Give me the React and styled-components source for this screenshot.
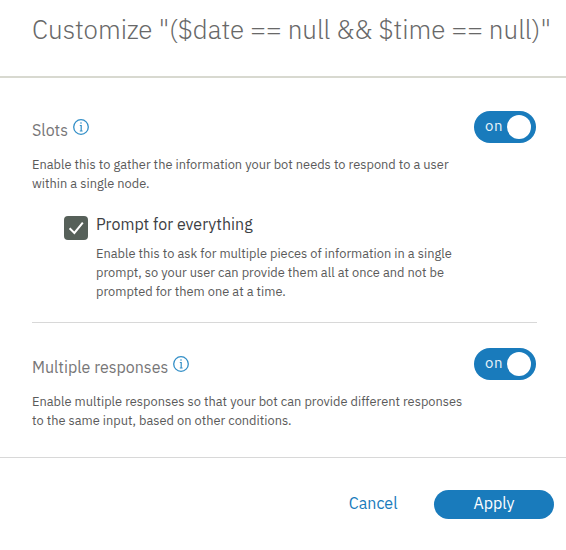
import React, { useState } from "react";
import styled, { createGlobalStyle } from "styled-components";

const GlobalStyle = createGlobalStyle`
  *, *::before, *::after { box-sizing: border-box; }
  html, body, #root { height: 100%; }
  body {
    margin: 0;
    overflow: hidden;
    background: #fff;
    font-family: "IBM Plex Sans", Roboto, sans-serif;
  }
  button { font-family: inherit; border: 0; padding: 0; cursor: pointer; }
`;

const Dialog = styled.section`
  display: flex;
  flex-direction: column;
  width: 566px;
  height: 550px;
`;

const Header = styled.header`
  height: 78px;
  padding: 11px 0 0 32px;
  border-bottom: 2px solid #d8d9d0;
`;

const Title = styled.h1`
  margin: 0;
  font-size: 26px;
  font-weight: 300;
  line-height: 36px;
  white-space: nowrap;
  color: #686868;
`;

const Body = styled.div`
  height: 380px;
  padding: 0 29px 0 32px;
  border-bottom: 1px solid #d8d8d8;
`;

const Setting = styled.section`
  padding-top: ${(p) => p.$top}px;
  height: ${(p) => p.$height}px;
  border-bottom: ${(p) => (p.$divided ? "1px solid #d8d8d8" : "0")};
`;

const SettingHead = styled.div`
  display: flex;
  justify-content: space-between;
  height: 44px;
  padding-right: 1px;
`;

const SettingName = styled.h2`
  display: flex;
  align-items: flex-start;
  gap: 5px;
  margin: 0;
  padding-top: 7px;
  font-size: 16px;
  font-weight: 400;
  line-height: 24px;
  color: #777677;
`;

const InfoIcon = styled.svg`
  display: block;
  width: 16px;
  height: 16px;
  margin-top: 1px;
  fill: none;
  stroke: #338fc7;
`;

const Description = styled.p`
  margin: 0;
  font-size: 12.8px;
  line-height: 19px;
  letter-spacing: 0.01px;
  white-space: pre-line;
  color: #5a5a5a;
`;

const Switch = styled.button`
  display: flex;
  align-items: center;
  justify-content: ${(p) => (p.$on ? "flex-end" : "flex-start")};
  flex-direction: ${(p) => (p.$on ? "row" : "row-reverse")};
  gap: 4px;
  width: 62px;
  height: 32px;
  padding: 0 5px;
  border-radius: 16px;
  background: ${(p) => (p.$on ? "#197bbc" : "#8c9696")};
`;

const SwitchText = styled.span`
  font-size: 15px;
  line-height: 20px;
  letter-spacing: 0.5px;
  margin-top: -2px;
  color: #e8f2f8;
`;

const Knob = styled.span`
  width: 24px;
  height: 24px;
  border-radius: 50%;
  background: #fff;
`;

const Option = styled.div`
  display: flex;
  gap: 8px;
  margin: 19px 0 0 32px;
`;

const Checkbox = styled.button`
  flex: none;
  width: 24px;
  height: 24px;
  margin-top: 4px;
  border-radius: 4px;
  background: #566059;
  color: #fff;
`;

const CheckIcon = styled.svg`
  display: block;
  width: 24px;
  height: 24px;
  fill: none;
  stroke: currentColor;
  stroke-width: 2;
`;

const OptionName = styled.h3`
  margin: 0 0 8px;
  font-size: 16px;
  font-weight: 400;
  line-height: 24px;
  letter-spacing: 0.03px;
  color: #3c4043;
`;

const Footer = styled.footer`
  display: flex;
  flex: 1;
  align-items: flex-start;
  justify-content: flex-end;
  gap: 36.5px;
  padding: 32px 12px 0 0;
`;

const CancelButton = styled.button`
  height: 29px;
  padding-bottom: 2px;
  background: none;
  font-size: 16px;
  line-height: 27px;
  color: #197bbc;
`;

const ApplyButton = styled.button`
  width: 120px;
  height: 29px;
  padding-bottom: 3px;
  border-radius: 14.5px;
  background: #197bbc;
  font-size: 16px;
  line-height: 26px;
  color: #fff;
`;

function Info() {
  return (
    <InfoIcon viewBox="0 0 16 16" aria-label="More information">
      <circle cx="8" cy="8" r="7.3" strokeWidth="1.3" />
      <path d="M8.2 6V12M6.8 6.5H8.2M6.8 12h2.8" strokeWidth="1.2" />
      <circle cx="8" cy="4" r="0.8" fill="#338fc7" stroke="none" />
    </InfoIcon>
  );
}

function Toggle({ label }) {
  const [on, setOn] = useState(true);
  return (
    <Switch $on={on} role="switch" aria-checked={on} aria-label={label} onClick={() => setOn(!on)}>
      <SwitchText>{on ? "on" : "off"}</SwitchText>
      <Knob />
    </Switch>
  );
}

export default function App() {
  const [prompt, setPrompt] = useState(true);
  return (
    <>
      <GlobalStyle />
      <Dialog>
        <Header>
          <Title>Customize "($date == null && $time == null)"</Title>
        </Header>
        <Body>
          <Setting $top={33} $height={245} $divided>
            <SettingHead>
              <SettingName>Slots <Info /></SettingName>
              <Toggle label="Slots" />
            </SettingHead>
            <Description>
              {"Enable this to gather the information your bot needs to respond to a user\nwithin a single node."}
            </Description>
            <Option>
              <Checkbox role="checkbox" aria-checked={prompt} aria-label="Prompt for everything" onClick={() => setPrompt(!prompt)}>
                {prompt && (
                  <CheckIcon viewBox="0 0 24 24">
                    <path d="M5.6 12.2 10.4 17 18.8 6.6" />
                  </CheckIcon>
                )}
              </Checkbox>
              <div>
                <OptionName>Prompt for everything</OptionName>
                <Description>
                  {"Enable this to ask for multiple pieces of information in a single\nprompt, so your user can provide them all at once and not be\nprompted for them one at a time."}
                </Description>
              </div>
            </Option>
          </Setting>
          <Setting $top={25} $height={134}>
            <SettingHead>
              <SettingName>Multiple responses <Info /></SettingName>
              <Toggle label="Multiple responses" />
            </SettingHead>
            <Description>
              {"Enable multiple responses so that your bot can provide different responses\nto the same input, based on other conditions."}
            </Description>
          </Setting>
        </Body>
        <Footer>
          <CancelButton>Cancel</CancelButton>
          <ApplyButton>Apply</ApplyButton>
        </Footer>
      </Dialog>
    </>
  );
}
